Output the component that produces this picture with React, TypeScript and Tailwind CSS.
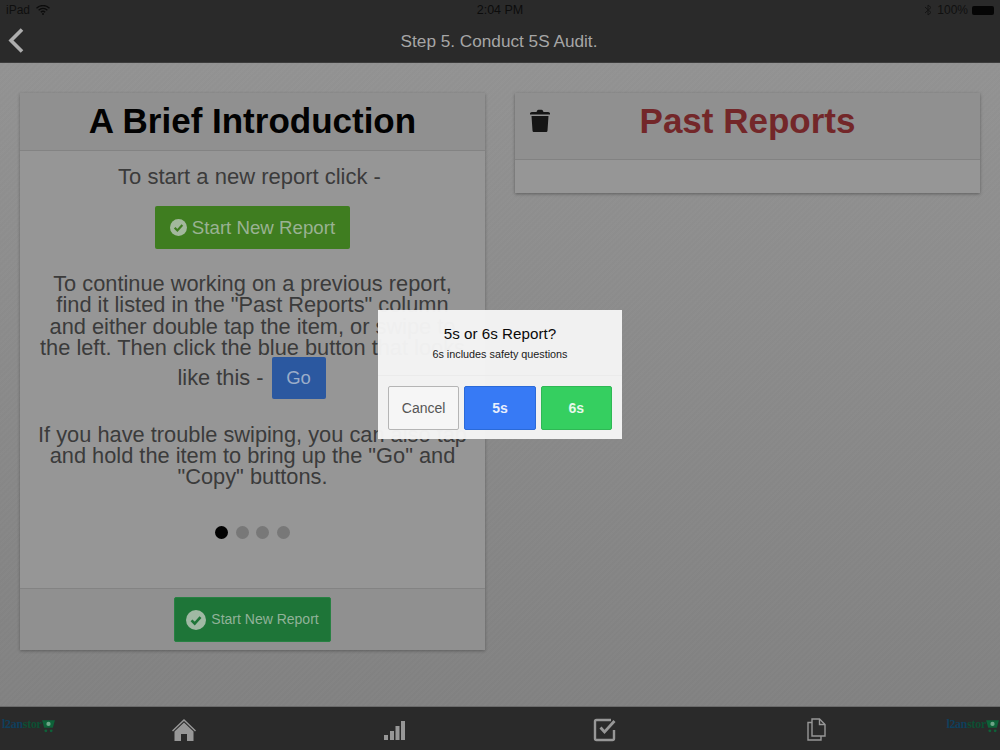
import React from "react";

const F = "font-['Liberation_Sans',Arial,sans-serif]";

function Logo() {
  return (
    <div className="flex items-center h-[16px]">
      <span className="font-['Liberation_Serif',serif] text-[12px] font-bold leading-none tracking-[-0.3px] text-[#0e3f5c]">
        l2an<span className="text-[#0c4f33]">stor</span>
      </span>
      <svg width="15" height="15" viewBox="0 0 14 14" className="-ml-[1px] mt-[3px] shrink-0">
        <path d="M1 2h12l-2 7H3z" fill="#0e6239" />
        <circle cx="7" cy="5.500" r="2" fill="#6fa588" />
        <circle cx="4.500" cy="12" r="1.300" fill="#0e6239" />
        <circle cx="9.500" cy="12" r="1.300" fill="#0e6239" />
      </svg>
    </div>
  );
}

function CheckDisc({ size, mark, fill }: { size: number; mark: string; fill: string }) {
  return (
    <svg width={size} height={size} viewBox="0 0 20 20" className="shrink-0">
      <circle cx="10" cy="10" r="10" fill={fill} />
      <path d="M5.500 10.300l3.200 3.200 5.800-6.400" fill="none" stroke={mark} strokeWidth="2.600" />
    </svg>
  );
}

export default function App() {
  return (
    <div className={`${F} w-[1000px] h-[750px] flex flex-col overflow-hidden relative bg-[#8a8a8a]`}>
      <header className="h-[63px] shrink-0 bg-[#2a2a2a] border-b border-[#3c3c3c] flex flex-col">
        <div className="h-[20px] px-[6px] flex items-center justify-between text-[12px] text-[#101010] relative">
          <div className="flex items-center gap-[6px] w-[150px]">
            <span className="text-[#0f0f0f]">iPad</span>
            <svg width="14" height="10" viewBox="0 0 14 10">
              <path d="M0.500 3.200a9.200 9.200 0 0 1 13 0M2.600 5.300a6.200 6.200 0 0 1 8.800 0M4.800 7.300a3.200 3.200 0 0 1 4.400 0" fill="none" stroke="#0c0c0c" strokeWidth="1.300" />
              <circle cx="7" cy="9" r="1" fill="#0c0c0c" />
            </svg>
          </div>
          <span className="font-medium text-[#0c0c0c] text-[12.5px]">2:04 PM</span>
          <div className="flex items-center justify-end gap-[5px] w-[150px]">
            <svg width="8" height="12" viewBox="0 0 8 12">
              <path d="M1 3l6 5.500L4 11V1l3 2.500L1 9" fill="none" stroke="#141414" strokeWidth="1" />
            </svg>
            <span>100%</span>
            <div className="w-[22px] h-[9px] bg-[#050505] rounded-[2px] -ml-[1px]" />
          </div>
        </div>
        <div className="flex-1 relative flex items-center justify-center">
          <svg width="18" height="28" viewBox="0 0 18 28" className="absolute left-[7px] top-[7px]">
            <path d="M15 2.500L4 13.500l11 11" fill="none" stroke="#aeaeae" strokeWidth="3.600" />
          </svg>
          <span className="text-[17.2px] text-[#a6a6a6] mt-[2px] mr-[2px]">Step 5. Conduct 5S Audit.</span>
        </div>
      </header>

      <main className="flex-1 min-h-0 px-[20px] pt-[30px] flex gap-[30px] items-start bg-[repeating-linear-gradient(135deg,rgba(255,255,255,0.015)_0px,rgba(255,255,255,0.015)_2px,transparent_2px,transparent_4px),linear-gradient(180deg,#929292_0%,#818181_100%)]">
        <section className="w-[465px] h-[557px] bg-[#969696] shadow-[0_1px_3px_rgba(0,0,0,0.3)] flex flex-col">
          <div className="h-[58px] shrink-0 bg-[#909090] border-b border-[#838383] flex items-center justify-center">
            <h1 className="text-[35px] font-bold text-[#020202] leading-none -mt-[3px]">A Brief Introduction</h1>
          </div>
          <div className="flex-1 flex flex-col items-center text-[#3b3b3b]">
            <p className="text-[22px] leading-[25px] mt-[13px] mr-[6px]">To start a new report click -</p>
            <div className="mt-[17px] w-[195px] h-[43px] bg-[#3f7d20] rounded-[2px] flex items-center justify-center gap-[5px]">
              <CheckDisc size={17} mark="#3f7d20" fill="#a3b89d" />
              <span className="text-[18.7px] text-[#9ab293] mt-[2px]">Start New Report</span>
            </div>
            <p className="text-[21.8px] leading-[21.4px] text-center mt-[24px] whitespace-nowrap">
              To continue working on a previous report,<br />
              find it listed in the "Past Reports" column<br />
              and either double tap the item, or swipe to<br />
              the left. Then click the blue button that looks
            </p>
            <div className="flex items-center gap-[8px] h-[42px] -mt-[2px] text-[21.8px] mr-[2px]">
              <span className="mt-[2px]">like this -</span>
              <div className="w-[54px] h-[42px] bg-[#2b58a0] rounded-[2px] flex items-center justify-center text-[18.5px] text-[#9badc9]">Go</div>
            </div>
            <p className="text-[21.8px] leading-[21.4px] text-center mt-[25px] whitespace-nowrap">
              If you have trouble swiping, you can also tap<br />
              and hold the item to bring up the "Go" and<br />
              "Copy" buttons.
            </p>
            <div className="flex items-center gap-[7.5px] mt-[38px]">
              <span className="w-[13px] h-[13px] rounded-full bg-[#020202]" />
              <span className="w-[13px] h-[13px] rounded-full bg-[#787878]" />
              <span className="w-[13px] h-[13px] rounded-full bg-[#787878]" />
              <span className="w-[13px] h-[13px] rounded-full bg-[#787878]" />
            </div>
          </div>
          <div className="h-[62px] shrink-0 bg-[#909090] border-t border-[#838383] flex items-center justify-center">
            <div className="w-[157px] h-[45px] bg-[#1e7538] border border-[#288143] rounded-[2px] flex items-center justify-center gap-[5px]">
              <CheckDisc size={20} mark="#1e7538" fill="#a0b9a4" />
              <span className="text-[14px] text-[#91b298]">Start New Report</span>
            </div>
          </div>
        </section>

        <section className="w-[465px] h-[100px] bg-[#969696] shadow-[0_1px_3px_rgba(0,0,0,0.35)] flex flex-col">
          <div className="h-[67px] shrink-0 bg-[#909090] border-b border-[#828282] flex items-center justify-center relative">
            <svg width="20" height="24" viewBox="0 0 20 24" className="absolute left-[15px] top-[16px]">
              <path d="M0 4.500C0 3.500 1 3 3 3h3.500l.7-1.600C7.400 1 8 .8 8.500.8h3c.5 0 1.100.2 1.300.6L13.500 3H17c2 0 3 .5 3 1.500V5.500H0zM1.500 7h17l-1 14.500c0 1-.8 1.500-1.500 1.500H4c-.7 0-1.500-.5-1.500-1.500z" fill="#151515" />
            </svg>
            <h2 className="text-[35px] font-bold text-[#732729] leading-none -mt-[12px]">Past Reports</h2>
          </div>
        </section>
      </main>

      <footer className="h-[44px] shrink-0 bg-[#2a2a2a] border-t border-[#6a6a6a] flex items-start justify-between relative">
        <div className="ml-[2px] mt-[9px]"><Logo /></div>
        <svg width="24" height="24" viewBox="0 0 24 24" className="absolute left-[172px] top-[11px]">
          <path d="M12 1L0 12.500l1 1L12 3l11 10.500 1-1z" fill="#979797" />
          <path d="M12 4.500L2.500 13.500V23h6.500v-7h6v7h6.500v-9.500z" fill="#979797" />
        </svg>
        <svg width="22" height="22" viewBox="0 0 22 22" className="absolute left-[384px] top-[13px]">
          <rect x="0" y="15" width="4" height="5" fill="#979797" />
          <rect x="6" y="11" width="4" height="9" fill="#979797" />
          <rect x="11.500" y="6" width="4" height="14" fill="#979797" />
          <rect x="17" y="1" width="4" height="19" fill="#979797" />
        </svg>
        <svg width="26" height="26" viewBox="0 0 26 26" className="absolute left-[593px] top-[10px]">
          <path d="M21 13v8.500a1.500 1.500 0 0 1-1.500 1.500h-16A1.500 1.500 0 0 1 2 21.500v-17A1.500 1.500 0 0 1 3.500 3H18" fill="none" stroke="#979797" strokeWidth="2.400" />
          <path d="M7.500 10.500l4 4.500 10-11" fill="none" stroke="#979797" strokeWidth="2.800" />
        </svg>
        <svg width="22" height="26" viewBox="0 0 22 26" className="absolute left-[805px] top-[10px]">
          <path d="M7 2h7.500l5.500 5.500V19H7z" fill="none" stroke="#979797" strokeWidth="1.400" />
          <path d="M14.500 2v5.500H20" fill="none" stroke="#979797" strokeWidth="1.400" />
          <path d="M7 5.500H3V23h13v-4" fill="none" stroke="#979797" strokeWidth="1.400" />
        </svg>
        <div className="mt-[9px]"><Logo /></div>
      </footer>

      <div className="absolute left-[378px] top-[310px] w-[244px] h-[129px] bg-[#f5f5f5]/[0.97] flex flex-col">
        <div className="h-[66px] border-b border-[#ebebeb] flex flex-col items-center">
          <div className="text-[15.2px] text-[#0a0a0a] leading-[18px] mt-[15px]">5s or 6s Report?</div>
          <div className="text-[10.8px] text-[#1a1a1a] leading-[13px] mt-[5px]">6s includes safety questions</div>
        </div>
        <div className="flex gap-[5px] px-[10px] mt-[10px]">
          <div className="flex-1 h-[44px] bg-[#f6f6f6] border border-[#b5b5b5] rounded-[2px] flex items-center justify-center text-[14px] text-[#555555]">Cancel</div>
          <div className="flex-1 h-[44px] bg-[#377af5] border border-[#2b6ad8] rounded-[2px] flex items-center justify-center text-[14px] font-bold text-[#e8eefc]">5s</div>
          <div className="flex-1 h-[44px] bg-[#35cf60] border border-[#2fb855] rounded-[2px] flex items-center justify-center text-[14px] font-bold text-[#e6f8eb]">6s</div>
        </div>
      </div>
    </div>
  );
}
